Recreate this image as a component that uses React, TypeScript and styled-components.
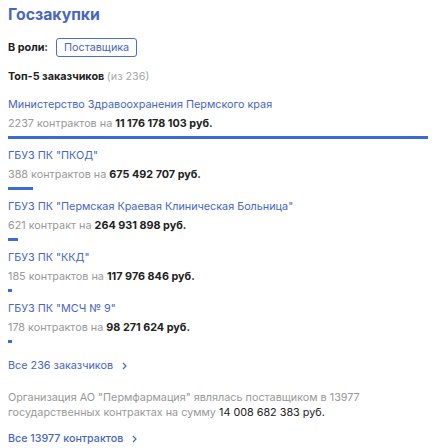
import React from 'react'
import styled, { createGlobalStyle } from 'styled-components'

const GlobalStyle = createGlobalStyle`
  body {
    margin: 0;
    background: #fff;
    font-family: Inter, "Noto Sans", sans-serif;
  }
`

const Page = styled.div`
  padding: 5px 8px 0 8px;
`

const Title = styled.h1`
  margin: 0;
  font-size: 15.8px;
  font-weight: 700;
  color: #4766c2;
  line-height: 20px;
`

const RoleRow = styled.div`
  display: flex;
  align-items: center;
  gap: 8px;
  margin-top: 13px;
`

const RoleLabel = styled.span`
  font-size: 10.8px;
  font-weight: 700;
  color: #222;
`

const RoleButton = styled.button`
  font-family: inherit;
  font-size: 10.8px;
  color: #4766c2;
  background: #fff;
  border: 1px solid #4a6fd0;
  border-radius: 3px;
  height: 19px;
  padding: 0 7px;
`

const Subtitle = styled.div`
  margin-top: 13px;
  font-size: 10.8px;
  font-weight: 700;
  color: #222;
  line-height: 14px;
`

const Muted = styled.span`
  font-weight: 400;
  color: #aaa;
`

const List = styled.div`
  display: flex;
  flex-direction: column;
  margin-top: 14px;
`

const Item = styled.div`
  display: flex;
  flex-direction: column;
  height: 51px;
`

const Name = styled.a`
  font-size: 10.8px;
  color: #4766c2;
  line-height: 14px;
  text-decoration: none;
`

const Stat = styled.div`
  margin-top: 5px;
  font-size: 10.8px;
  color: #999;
  line-height: 14px;
`

const Amount = styled.b<{ $plain?: boolean }>`
  font-weight: ${p => (p.$plain ? 400 : 700)};
  color: #222;
`

const Bar = styled.div`
  margin-top: 5px;
  height: 3px;
  background: #3c6bd6;
`

const LinkRow = styled.div<{ $gap: number }>`
  display: flex;
  margin-top: ${p => p.$gap}px;
`

const MoreLink = styled.a<{ $strong?: boolean }>`
  display: flex;
  align-items: center;
  gap: 9px;
  font-size: ${p => (p.$strong ? 10.7 : 10.8)}px;
  font-weight: ${p => (p.$strong ? 500 : 400)};
  color: #4766c2;
  text-decoration: none;
  line-height: 14px;
`

const Summary = styled.p`
  margin: 17px 0 0 0;
  max-width: 380px;
  font-size: 10.8px;
  line-height: 15px;
  color: #999;
`

const Chevron = () => (
  <svg width="5" height="8" viewBox="0 0 5 8">
    <polyline points="1,1 4,4 1,7" fill="none" stroke="#4766c2" strokeWidth="1.2" />
  </svg>
)

const customers = [
  { name: 'Министерство Здравоохранения Пермского края', count: '2237 контрактов', sum: 11176178103 },
  { name: 'ГБУЗ ПК "ПКОД"', count: '388 контрактов', sum: 675492707 },
  { name: 'ГБУЗ ПК "Пермская Краевая Клиническая Больница"', count: '621 контракт', sum: 264931898 },
  { name: 'ГБУЗ ПК "ККД"', count: '185 контрактов', sum: 117976846 },
  { name: 'ГБУЗ ПК "МСЧ № 9"', count: '178 контрактов', sum: 98271624 },
]

const fmt = (n: number) => n.toString().replace(/\B(?=(\d{3})+(?!\d))/g, ' ')

export default function App() {
  const max = customers[0].sum

  return (
    <Page>
      <GlobalStyle />
      <Title>Госзакупки</Title>
      <RoleRow>
        <RoleLabel>В роли:</RoleLabel>
        <RoleButton>Поставщика</RoleButton>
      </RoleRow>
      <Subtitle>
        Топ-5 заказчиков <Muted>(из 236)</Muted>
      </Subtitle>
      <List>
        {customers.map(c => (
          <Item key={c.name}>
            <Name href="#">{c.name}</Name>
            <Stat>
              {c.count} на <Amount>{fmt(c.sum)} руб.</Amount>
            </Stat>
            <Bar style={{ width: `${(c.sum / max) * 100}%` }} />
          </Item>
        ))}
      </List>
      <LinkRow $gap={6}>
        <MoreLink href="#">
          Все 236 заказчиков
          <Chevron />
        </MoreLink>
      </LinkRow>
      <Summary>
        Организация АО "Пермфармация" являлась поставщиком в 13977 государственных контрактах на сумму{' '}
        <Amount $plain>14 008 682 383 руб.</Amount>
      </Summary>
      <LinkRow $gap={12}>
        <MoreLink href="#" $strong>
          Все 13977 контрактов
          <Chevron />
        </MoreLink>
      </LinkRow>
    </Page>
  )
}
